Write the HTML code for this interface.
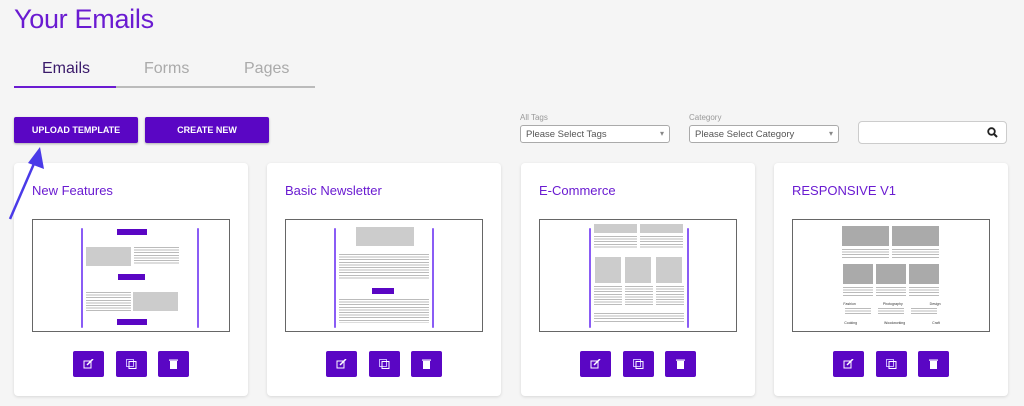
<!DOCTYPE html>
<html><head><meta charset="utf-8"><style>
*{margin:0;padding:0;box-sizing:border-box}
body{width:1024px;height:406px;background:#f5f5f5;font-family:"Liberation Sans",sans-serif;position:relative;overflow:hidden}
.a{position:absolute}
h1{position:absolute;left:14px;top:4px;font-size:27px;font-weight:normal;color:#6a1bd1;letter-spacing:-0.3px}
.tab{position:absolute;top:60px;font-size:16px;color:#aaa}
.btn{position:absolute;top:117px;height:26px;background:#5a06c4;color:#fff;font-size:9px;font-weight:bold;text-align:center;line-height:26px;border-radius:2px;box-shadow:0 1px 2px rgba(0,0,0,.3)}
.lbl{position:absolute;top:113px;font-size:8px;color:#999}
.sel{position:absolute;top:125px;height:18px;border:1px solid #aaa;border-radius:3px;background:#fff;font-size:9.5px;color:#555;padding:3px 5px}
.sel:after{content:"▾";position:absolute;right:5px;top:3px;font-size:8px;color:#888}
.card{position:absolute;top:163px;width:234px;height:233px;background:#fff;border-radius:4px;box-shadow:0 1px 3px rgba(0,0,0,.12)}
.card h2{position:absolute;left:18px;top:20px;font-size:13px;font-weight:normal;color:#6a1bd1}
.pv{position:absolute;left:18px;top:56px;width:198px;height:113px;border:1px solid #666;background:#fff;overflow:hidden}
.ib{position:absolute;top:188px;width:31px;height:26px;background:#5a06c4;border-radius:2px}
.ib svg{position:absolute;left:10px;top:8px}
.bar{position:absolute;top:8px;width:2px;height:100px;background:#8a5cf5;border-radius:1px}
.g{position:absolute;background:#ccc}
.t{position:absolute;background:repeating-linear-gradient(#bbb 0 1px,transparent 1px 2.6px)}
.pb{position:absolute;background:#5a06c4;height:6px}
</style></head><body>
<h1>Your Emails</h1>
<div class="tab" style="left:42px;color:#3a1a6a">Emails</div>
<div class="tab" style="left:144px">Forms</div>
<div class="tab" style="left:244px">Pages</div>
<div class="a" style="left:14px;top:86px;width:301px;height:2px;background:#bbb"></div>
<div class="a" style="left:14px;top:86px;width:102px;height:2px;background:#6a1bd1"></div>
<div class="btn" style="left:14px;width:124px">UPLOAD TEMPLATE</div>
<div class="btn" style="left:145px;width:124px">CREATE NEW</div>
<div class="lbl" style="left:520px">All Tags</div>
<div class="sel" style="left:520px;width:150px">Please Select Tags</div>
<div class="lbl" style="left:689px">Category</div>
<div class="sel" style="left:689px;width:150px">Please Select Category</div>
<div class="a" style="left:858px;top:121px;width:149px;height:23px;border:1px solid #ccc;border-radius:4px;background:#fff"><svg class="a" style="right:8px;top:5px" width="11" height="11"><circle cx="4.5" cy="4.5" r="3.3" fill="none" stroke="#222" stroke-width="1.8"/><line x1="7" y1="7" x2="10" y2="10" stroke="#222" stroke-width="2"/></svg></div>

<div class="card" style="left:14px"><h2>New Features</h2>
<div class="pv"><div class="bar" style="left:48px"></div><div class="bar" style="left:164px"></div>
<div class="pb" style="left:84px;top:9px;width:30px"></div>
<div class="g" style="left:53px;top:27px;width:45px;height:19px"></div><div class="t" style="left:101px;top:27px;width:45px;height:18px"></div>
<div class="pb" style="left:85px;top:54px;width:27px"></div>
<div class="t" style="left:53px;top:72px;width:45px;height:20px"></div><div class="g" style="left:100px;top:72px;width:45px;height:19px"></div>
<div class="pb" style="left:84px;top:99px;width:30px"></div></div>
<div class="ib" style="left:59px"><svg width="11" height="10"><rect x="1" y="2" width="7" height="7" fill="none" stroke="#fff"/><line x1="4" y1="6" x2="10" y2="0" stroke="#fff" stroke-width="1.5"/></svg></div>
<div class="ib" style="left:102px"><svg width="11" height="10"><rect x="0.5" y="0.5" width="7" height="7" fill="none" stroke="#c9b0ff"/><rect x="3" y="2.5" width="7" height="7" fill="none" stroke="#fff"/></svg></div>
<div class="ib" style="left:144px"><svg width="11" height="10"><rect x="2" y="2" width="7" height="8" fill="#fff"/><rect x="1" y="0.5" width="9" height="1.2" fill="#fff"/></svg></div></div>

<div class="card" style="left:267px"><h2>Basic Newsletter</h2>
<div class="pv"><div class="bar" style="left:48px"></div><div class="bar" style="left:146px"></div>
<div class="g" style="left:70px;top:7px;width:58px;height:19px"></div>
<div class="t" style="left:53px;top:34px;width:90px;height:25px"></div>
<div class="pb" style="left:86px;top:68px;width:22px"></div>
<div class="t" style="left:53px;top:79px;width:90px;height:24px"></div></div>
<div class="ib" style="left:59px"><svg width="11" height="10"><rect x="1" y="2" width="7" height="7" fill="none" stroke="#fff"/><line x1="4" y1="6" x2="10" y2="0" stroke="#fff" stroke-width="1.5"/></svg></div>
<div class="ib" style="left:102px"><svg width="11" height="10"><rect x="0.5" y="0.5" width="7" height="7" fill="none" stroke="#c9b0ff"/><rect x="3" y="2.5" width="7" height="7" fill="none" stroke="#fff"/></svg></div>
<div class="ib" style="left:144px"><svg width="11" height="10"><rect x="2" y="2" width="7" height="8" fill="#fff"/><rect x="1" y="0.5" width="9" height="1.2" fill="#fff"/></svg></div></div>

<div class="card" style="left:521px"><h2>E-Commerce</h2>
<div class="pv"><div class="bar" style="left:49px"></div><div class="bar" style="left:147px"></div>
<div class="g" style="left:54px;top:4px;width:43px;height:9px"></div><div class="g" style="left:100px;top:4px;width:43px;height:9px"></div>
<div class="t" style="left:54px;top:16px;width:43px;height:12px"></div><div class="t" style="left:100px;top:16px;width:43px;height:12px"></div>
<div class="g" style="left:55px;top:37px;width:26px;height:26px"></div><div class="g" style="left:85px;top:37px;width:26px;height:26px"></div><div class="g" style="left:116px;top:37px;width:26px;height:26px"></div>
<div class="t" style="left:54px;top:66px;width:28px;height:20px"></div><div class="t" style="left:85px;top:66px;width:28px;height:20px"></div><div class="t" style="left:116px;top:66px;width:28px;height:20px"></div>
<div class="t" style="left:54px;top:93px;width:90px;height:10px"></div></div>
<div class="ib" style="left:59px"><svg width="11" height="10"><rect x="1" y="2" width="7" height="7" fill="none" stroke="#fff"/><line x1="4" y1="6" x2="10" y2="0" stroke="#fff" stroke-width="1.5"/></svg></div>
<div class="ib" style="left:102px"><svg width="11" height="10"><rect x="0.5" y="0.5" width="7" height="7" fill="none" stroke="#c9b0ff"/><rect x="3" y="2.5" width="7" height="7" fill="none" stroke="#fff"/></svg></div>
<div class="ib" style="left:144px"><svg width="11" height="10"><rect x="2" y="2" width="7" height="8" fill="#fff"/><rect x="1" y="0.5" width="9" height="1.2" fill="#fff"/></svg></div></div>

<div class="card" style="left:774px"><h2>RESPONSIVE V1</h2>
<div class="pv"><div class="g" style="left:49px;top:6px;width:47px;height:20px;background:#aaa"></div><div class="g" style="left:99px;top:6px;width:47px;height:20px;background:#aaa"></div>
<div class="t" style="left:49px;top:29px;width:47px;height:10px"></div><div class="t" style="left:99px;top:29px;width:47px;height:10px"></div>
<div class="g" style="left:50px;top:44px;width:30px;height:20px;background:#aaa"></div><div class="g" style="left:83px;top:44px;width:30px;height:20px;background:#aaa"></div><div class="g" style="left:116px;top:44px;width:30px;height:20px;background:#aaa"></div>
<div class="t" style="left:50px;top:67px;width:30px;height:9px"></div><div class="t" style="left:83px;top:67px;width:30px;height:9px"></div><div class="t" style="left:116px;top:67px;width:30px;height:9px"></div>
<div class="a" style="left:0;top:82px;width:198px;font-size:3.5px;color:#333;text-align:center;word-spacing:26px">Fashion Photography Design</div>
<div class="t" style="left:52px;top:88px;width:26px;height:6px"></div><div class="t" style="left:85px;top:88px;width:26px;height:6px"></div><div class="t" style="left:118px;top:88px;width:26px;height:6px"></div>
<div class="a" style="left:0;top:101px;width:198px;font-size:3.5px;color:#333;text-align:center;word-spacing:26px">Cooking Woodworking Craft</div></div>
<div class="ib" style="left:59px"><svg width="11" height="10"><rect x="1" y="2" width="7" height="7" fill="none" stroke="#fff"/><line x1="4" y1="6" x2="10" y2="0" stroke="#fff" stroke-width="1.5"/></svg></div>
<div class="ib" style="left:102px"><svg width="11" height="10"><rect x="0.5" y="0.5" width="7" height="7" fill="none" stroke="#c9b0ff"/><rect x="3" y="2.5" width="7" height="7" fill="none" stroke="#fff"/></svg></div>
<div class="ib" style="left:144px"><svg width="11" height="10"><rect x="2" y="2" width="7" height="8" fill="#fff"/><rect x="1" y="0.5" width="9" height="1.2" fill="#fff"/></svg></div></div>

<svg class="a" style="left:6px;top:145px;z-index:5" width="40" height="78"><line x1="4" y1="74" x2="30" y2="14" stroke="#4a3ae8" stroke-width="2.5"/><polygon points="34,2 38,24 22,18" fill="#4a3ae8"/></svg>
</body></html>
